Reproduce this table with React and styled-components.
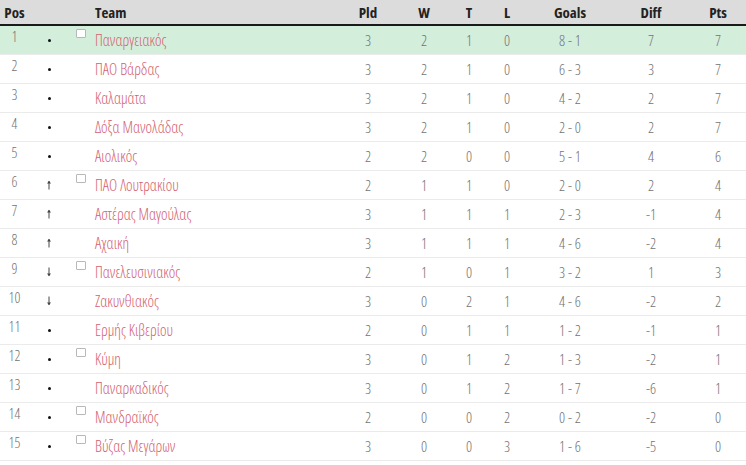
import React from "react";
import styled, { createGlobalStyle } from "styled-components";

const Global = createGlobalStyle`
  html, body { margin: 0; padding: 0; background: #fff; }
  body { font-family: "Open Sans", "Liberation Sans Narrow", "Liberation Sans", sans-serif; }
`;

const COLS = "29px 40px 26px 245px 56px 56px 34px 42px 84px 78px 56px";

const Table = styled.div`
  width: 746px;
  display: flex;
  flex-direction: column;
`;

const HeadRow = styled.div`
  display: grid;
  grid-template-columns: ${COLS};
  height: 24px;
  background: #dcdcdc;
  border-bottom: 2px solid #1a1a1a;
  align-items: center;
`;

const HeadCell = styled.div`
  font-family: "Open Sans", sans-serif;
  font-stretch: 75%;
  font-weight: 700;
  font-size: 15px;
  color: #222;
  text-align: ${(p) => (p.$left ? "left" : "center")};
  white-space: nowrap;
`;

const Row = styled.div`
  display: grid;
  grid-template-columns: ${COLS};
  height: 28px;
  border-bottom: 1px solid #ebebeb;
  background: ${(p) => (p.$highlight ? "#d4eedc" : "#fff")};
  align-items: center;
`;

const Cell = styled.div`
  font-family: "Open Sans", sans-serif;
  font-stretch: 75%;
  font-weight: 300;
  font-size: 15px;
  color: #727272;
  text-align: center;
  white-space: nowrap;
`;

const PosCell = styled(Cell)`
  font-size: 14.5px;
  align-self: start;
  padding-top: 1px;
`;

const MarkCell = styled.div`
  display: flex;
  justify-content: center;
  align-items: center;
`;

const Dot = styled.span`
  display: block;
  width: 3px;
  height: 3px;
  border-radius: 50%;
  background: #111;
`;

const BoxCell = styled.div`
  align-self: start;
  padding-top: 3px;
  padding-left: 7px;
`;

const Box = styled.span`
  display: block;
  width: 8px;
  height: 7px;
  border: 1px solid #b8b8b8;
  border-radius: 1px;
  background: #fff;
`;

const TeamCell = styled(Cell)`
  text-align: left;
  color: #d4606f;
  font-size: 15.5px;
`;

function Arrow({ down }) {
  return (
    <svg width="6" height="10" viewBox="0 0 6 10" style={{ transform: down ? "rotate(180deg)" : undefined }}>
      <path d="M3 1.2 V9.5" stroke="#444" strokeWidth="1" fill="none" />
      <path d="M1 3.6 L3 0.8 L5 3.6 Z" fill="#444" />
    </svg>
  );
}

const rows = [
  [1, "•", true, "Παναργειακός", 3, 2, 1, 0, "8 - 1", 7, 7],
  [2, "•", false, "ΠΑΟ Βάρδας", 3, 2, 1, 0, "6 - 3", 3, 7],
  [3, "•", false, "Καλαμάτα", 3, 2, 1, 0, "4 - 2", 2, 7],
  [4, "•", false, "Δόξα Μανολάδας", 3, 2, 1, 0, "2 - 0", 2, 7],
  [5, "•", false, "Αιολικός", 2, 2, 0, 0, "5 - 1", 4, 6],
  [6, "↑", true, "ΠΑΟ Λουτρακίου", 2, 1, 1, 0, "2 - 0", 2, 4],
  [7, "↑", false, "Αστέρας Μαγούλας", 3, 1, 1, 1, "2 - 3", -1, 4],
  [8, "↑", false, "Αχαική", 3, 1, 1, 1, "4 - 6", -2, 4],
  [9, "↓", true, "Πανελευσινιακός", 2, 1, 0, 1, "3 - 2", 1, 3],
  [10, "↓", false, "Ζακυνθιακός", 3, 0, 2, 1, "4 - 6", -2, 2],
  [11, "•", false, "Ερμής Κιβερίου", 2, 0, 1, 1, "1 - 2", -1, 1],
  [12, "•", true, "Κύμη", 3, 0, 1, 2, "1 - 3", -2, 1],
  [13, "•", false, "Παναρκαδικός", 3, 0, 1, 2, "1 - 7", -6, 1],
  [14, "•", true, "Μανδραϊκός", 2, 0, 0, 2, "0 - 2", -2, 0],
  [15, "•", true, "Βύζας Μεγάρων", 3, 0, 0, 3, "1 - 6", -5, 0],
];

export default function App() {
  return (
    <>
      <Global />
      <Table>
        <HeadRow>
          <HeadCell>Pos</HeadCell>
          <HeadCell />
          <HeadCell />
          <HeadCell $left>Team</HeadCell>
          <HeadCell>Pld</HeadCell>
          <HeadCell>W</HeadCell>
          <HeadCell>T</HeadCell>
          <HeadCell>L</HeadCell>
          <HeadCell>Goals</HeadCell>
          <HeadCell>Diff</HeadCell>
          <HeadCell>Pts</HeadCell>
        </HeadRow>
        {rows.map((r, i) => (
          <Row key={r[0]} $highlight={i === 0}>
            <PosCell>{r[0]}</PosCell>
            <MarkCell>
              {r[1] === "•" ? <Dot /> : <Arrow down={r[1] === "↓"} />}
            </MarkCell>
            <BoxCell>{r[2] ? <Box /> : null}</BoxCell>
            <TeamCell>{r[3]}</TeamCell>
            <Cell>{r[4]}</Cell>
            <Cell>{r[5]}</Cell>
            <Cell>{r[6]}</Cell>
            <Cell>{r[7]}</Cell>
            <Cell>{r[8]}</Cell>
            <Cell>{r[9]}</Cell>
            <Cell>{r[10]}</Cell>
          </Row>
        ))}
      </Table>
    </>
  );
}
